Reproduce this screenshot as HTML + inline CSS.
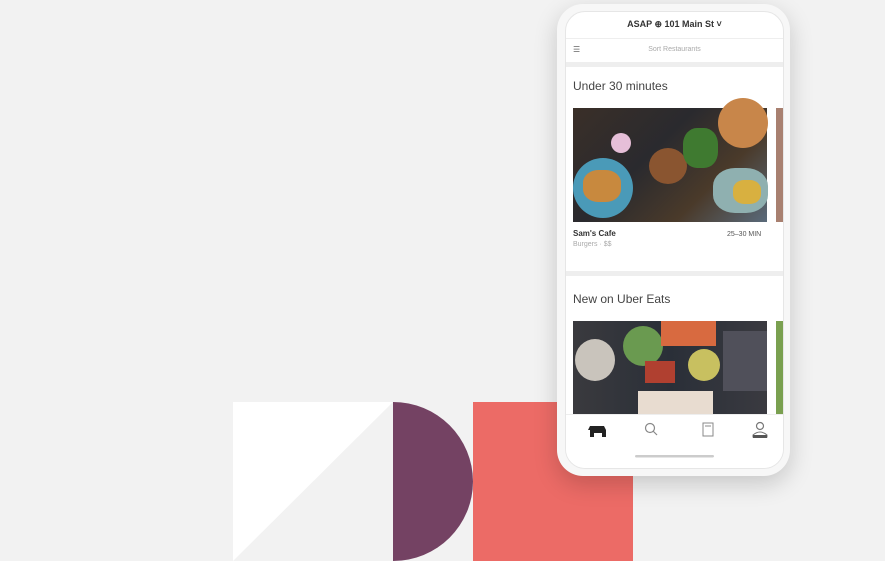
<!DOCTYPE html>
<html><head><style>
body{margin:0;width:885px;height:561px;background:#f2f2f2;overflow:hidden;position:relative;font-family:"Liberation Sans",sans-serif}
.a{position:absolute}
</style></head><body>
<svg class="a" style="left:0;top:0" width="885" height="561">
<polygon points="233,402 393,402 233,561" fill="#fff"/>
<path d="M393,402 A80,79.5 0 0 1 393,561 Z" fill="#744263"/>
<rect x="473" y="402" width="160" height="159" fill="#ec6b66"/>
</svg>
<div class="a" style="left:557px;top:4px;width:233px;height:472px;border-radius:26px;background:#f7f7f7;box-shadow:0 8px 24px rgba(0,0,0,.18)"></div>
<div class="a" style="left:565px;top:11px;width:219px;height:458px;border-radius:20px;background:#fff;border:1px solid #e6e6e6;box-sizing:border-box;overflow:hidden">
  <div class="a" style="left:0;top:7px;width:217px;text-align:center;font-size:9px;font-weight:bold;color:#333">ASAP ⊕ 101 Main St ˅</div>
  <div class="a" style="left:0;top:26px;width:217px;height:1px;background:#eee"></div>
  <div class="a" style="left:7px;top:33px;font-size:8px;color:#666">☰</div>
  <div class="a" style="left:0;top:34px;width:217px;text-align:center;font-size:7px;color:#aaa">Sort Restaurants</div>
  <div class="a" style="left:0;top:50px;width:217px;height:5px;background:#eee"></div>
  <div class="a" style="left:7px;top:67px;font-size:12px;color:#444">Under 30 minutes</div>
  <div class="a" style="left:7px;top:96px;width:194px;height:114px;background:linear-gradient(135deg,#3a2f28,#2a2a2e 40%,#4a3a2a 70%,#5a6a7a)">
    <div class="a" style="left:38px;top:25px;width:20px;height:20px;border-radius:50%;background:#e6bfd8"></div>
    <div class="a" style="left:76px;top:40px;width:38px;height:36px;border-radius:50%;background:#8a5530"></div>
    <div class="a" style="left:110px;top:20px;width:35px;height:40px;border-radius:40%;background:#3f7a30"></div>
    <div class="a" style="left:0;top:50px;width:60px;height:60px;border-radius:50%;background:#4a9ab8"></div>
    <div class="a" style="left:10px;top:62px;width:38px;height:32px;border-radius:40%;background:#c8893e"></div>
    <div class="a" style="left:145px;top:-10px;width:50px;height:50px;border-radius:50%;background:#c8864a"></div>
    <div class="a" style="left:140px;top:60px;width:55px;height:45px;border-radius:40%;background:#8fb0b0"></div>
    <div class="a" style="left:160px;top:72px;width:28px;height:24px;border-radius:40%;background:#d8b040"></div>
  </div>
  <div class="a" style="left:210px;top:96px;width:8px;height:114px;background:#a88070"></div>
  <div class="a" style="left:7px;top:217px;font-size:8px;font-weight:bold;color:#333">Sam's Cafe</div>
  <div class="a" style="left:161px;top:219px;font-size:7px;color:#555">25–30 MIN</div>
  <div class="a" style="left:7px;top:229px;font-size:7px;color:#aaa">Burgers · $$</div>
  <div class="a" style="left:0;top:259px;width:217px;height:5px;background:#eee"></div>
  <div class="a" style="left:7px;top:280px;font-size:12px;color:#444">New on Uber Eats</div>
  <div class="a" style="left:7px;top:309px;width:194px;height:93px;background:linear-gradient(90deg,#3a3a3e,#2a2f38 50%,#3a3a40)">
    <div class="a" style="left:2px;top:18px;width:40px;height:42px;border-radius:50%;background:#c9c4bc"></div>
    <div class="a" style="left:50px;top:5px;width:40px;height:40px;border-radius:50%;background:#6a9a50"></div>
    <div class="a" style="left:88px;top:0;width:55px;height:25px;background:#d86a40"></div>
    <div class="a" style="left:115px;top:28px;width:32px;height:32px;border-radius:50%;background:#c8c060"></div>
    <div class="a" style="left:72px;top:40px;width:30px;height:22px;background:#b04030"></div>
    <div class="a" style="left:65px;top:70px;width:75px;height:23px;background:#e8dcd0"></div>
    <div class="a" style="left:150px;top:10px;width:44px;height:60px;background:#50505a"></div>
  </div>
  <div class="a" style="left:210px;top:309px;width:8px;height:93px;background:#7aa050"></div>
  <div class="a" style="left:0;top:402px;width:217px;height:56px;background:#fff;border-top:1px solid #eee"></div>
  <svg class="a" style="left:0;top:402px" width="217" height="56">
    <path d="M24,12 h14 l2,4 h-18 z M24,16 h16 v7 h-4 v-4 h-8 v4 h-4 z" fill="#222"/>
    <circle cx="84" cy="14" r="4.5" fill="none" stroke="#888" stroke-width="1.2"/><line x1="87" y1="17" x2="91" y2="21" stroke="#888" stroke-width="1.2"/>
    <rect x="137" y="9" width="10" height="13" fill="none" stroke="#888" stroke-width="1"/><line x1="139" y1="12" x2="145" y2="12" stroke="#888"/>
    <circle cx="194" cy="12" r="3.5" fill="none" stroke="#777" stroke-width="1.2"/><path d="M187,21 q7,-6 14,0 v2 h-14z" fill="#fff" stroke="#777"/><rect x="187" y="21" width="14" height="3" fill="#555"/>
    <rect x="69" y="41" width="79" height="2.5" rx="1.2" fill="#ccc"/>
  </svg>
</div>
</body></html>
